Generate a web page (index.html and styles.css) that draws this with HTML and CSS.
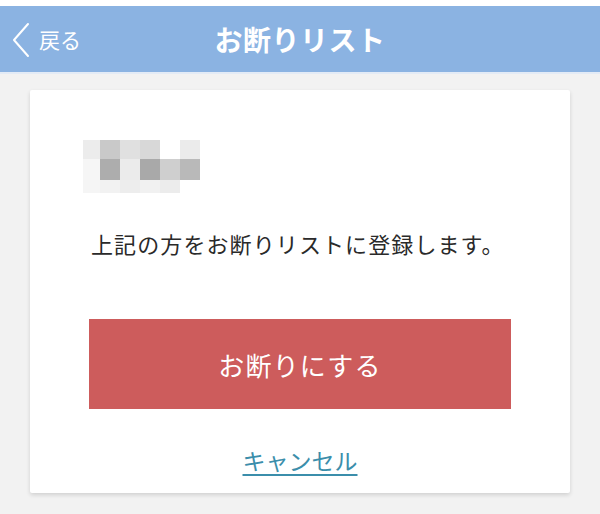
FILE: index.html
```html
<!DOCTYPE html>
<html lang="ja">
<head>
<meta charset="utf-8">
<title>お断りリスト</title>
<link rel="stylesheet" href="styles.css">
</head>
<body>
<div class="topstrip"></div>
<header class="navbar">
  <a class="back" href="#">
    <svg class="chev" width="20" height="36" viewBox="0 0 20 36"><path d="M17 2 L3 18 L17 34" fill="none" stroke="#fff" stroke-width="2" stroke-linecap="round" stroke-linejoin="round"/></svg>
    <span class="back-label">戻る</span>
  </a>
  <h1 class="title">お断りリスト</h1>
</header>
<div class="navline"></div>
<main class="page">
  <section class="card">
    <div class="mosaic">
      <span style="background:#ececec"></span><span style="background:#c9c9c9"></span><span style="background:#e0e0e0"></span><span style="background:#d8d8d8"></span><span style="background:#ffffff"></span><span style="background:#ebebeb"></span>
      <span style="background:#f6f6f6"></span><span style="background:#adadad"></span><span style="background:#ebebeb"></span><span style="background:#a9a9a9"></span><span style="background:#cfcfcf"></span><span style="background:#b9b9b9"></span>
      <span style="background:#f5f5f5"></span><span style="background:#f2f2f2"></span><span style="background:#ededed"></span><span style="background:#f1f1f1"></span><span style="background:#ececec"></span><span style="background:#ffffff"></span>
    </div>
    <p class="message">上記の方をお断りリストに登録します。</p>
    <button class="btn-refuse" type="button">お断りにする</button>
    <div class="cancel-row"><a class="cancel" href="#">キャンセル</a></div>
  </section>
</main>
</body>
</html>
```
FILE: styles.css
```css
* { box-sizing: border-box; }
html, body {
  margin: 0;
  padding: 0;
}
body {
  width: 600px;
  height: 514px;
  overflow: hidden;
  background: #f2f2f2;
  font-family: "Noto Sans CJK JP", "Noto Sans", sans-serif;
  color: #222;
}
.topstrip {
  height: 6px;
  background: #ffffff;
}
.navbar {
  position: relative;
  height: 66px;
  background: #8bb3e2;
  display: flex;
  align-items: center;
  justify-content: center;
}
.navline {
  height: 2px;
  background: #e3ebf6;
}
.back {
  position: absolute;
  left: 11px;
  top: 0;
  height: 66px;
  display: flex;
  align-items: center;
  gap: 8px;
  color: #fff;
  text-decoration: none;
}
.chev { display: block; margin-top: 2px; }
.back-label {
  font-size: 21px;
  line-height: 24px;
  color: #fff;
}
.title {
  margin: 0;
  font-size: 28px;
  line-height: 34px;
  font-weight: 700;
  color: #fff;
  letter-spacing: 0.5px;
}
.page {
  padding: 16px 30px 0;
}
.card {
  background: #fff;
  box-shadow: 0 2px 4px rgba(0,0,0,0.14);
  border-radius: 2px;
  padding: 50px 59px 18px;
  height: 403px;
}
.mosaic {
  display: grid;
  grid-template-columns: 17px 20px 20px 20px 20px 20px;
  grid-template-rows: 19px 21px 13px;
  margin-left: -6px;
  width: 117px;
}
.mosaic span { display: block; }
.message {
  margin: 35px 0 0 2px;
  font-size: 22px;
  line-height: 31px;
  letter-spacing: 1.1px;
  color: #2a2a2a;
}
.btn-refuse {
  display: block;
  width: 100%;
  height: 90px;
  margin-top: 60px;
  border: none;
  background: #cd5c5c;
  color: #fff;
  font-family: inherit;
  font-size: 26px;
  letter-spacing: 1.2px;
  border-radius: 0;
}
.cancel-row {
  margin-top: 36px;
  text-align: center;
  line-height: 30px;
}
.cancel {
  font-size: 23px;
  color: #3b8eab;
  text-decoration: underline;
  text-underline-offset: 4px;
  text-decoration-thickness: 2px;
}
```
